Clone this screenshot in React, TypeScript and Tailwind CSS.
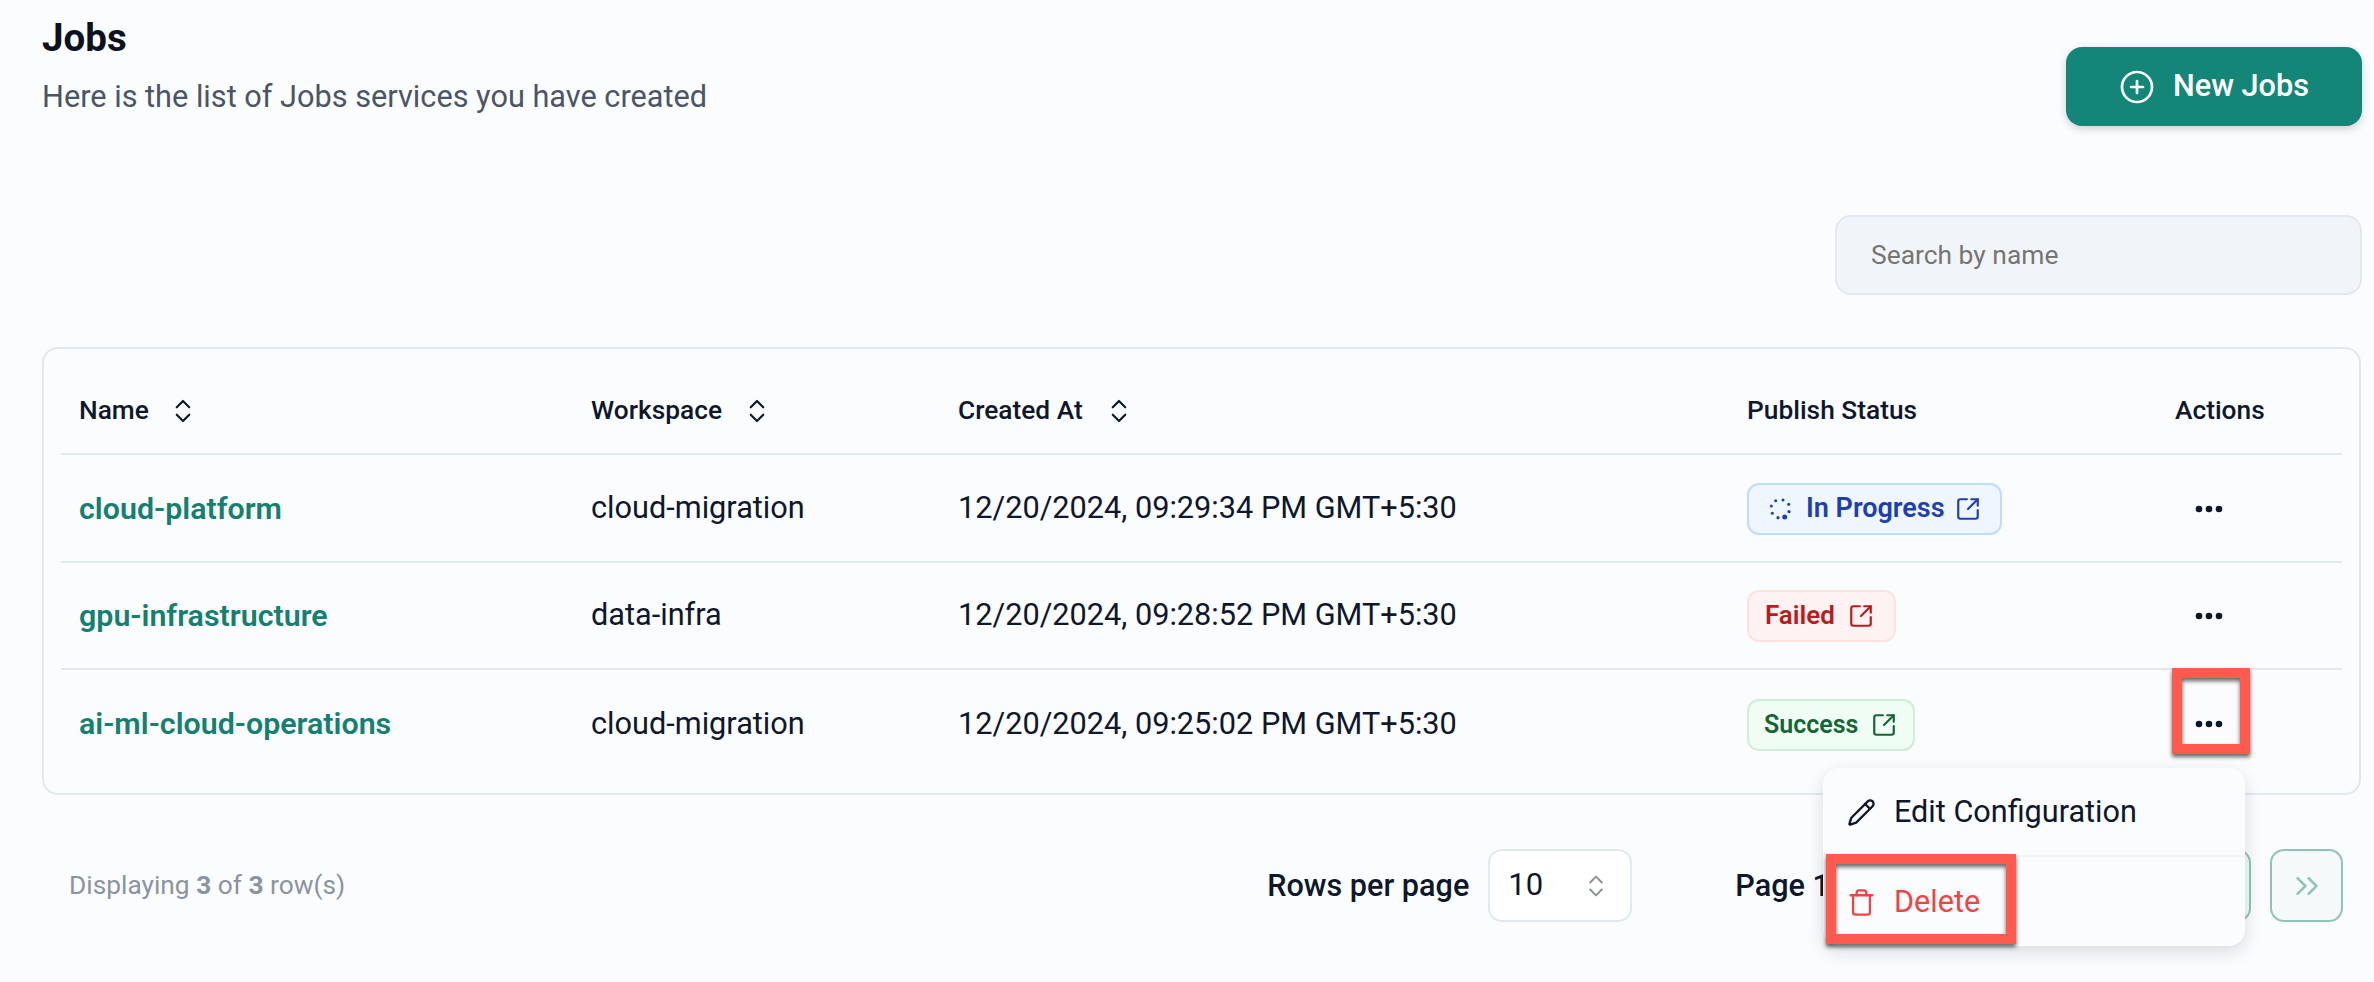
import { ChevronsUpDown, ChevronsRight, CirclePlus, Pencil, SquareArrowOutUpRight, Trash } from "lucide-react";

const DotSpinner = () => (
  <svg width="24" height="24" viewBox="0 0 24 24" fill="currentColor" className="shrink-0">
    <circle cx="7.7" cy="3.7" r="1.5" />
    <circle cx="15" cy="3" r="1.5" />
    <circle cx="20.7" cy="7.3" r="1.5" />
    <circle cx="21" cy="14.7" r="1.6" />
    <circle cx="16.7" cy="20" r="2.5" />
    <circle cx="10" cy="20.7" r="1.6" />
    <circle cx="4.3" cy="16.3" r="1.5" />
    <circle cx="3.3" cy="9" r="1.5" />
  </svg>
);

const Dots = () => (
  <svg width="28" height="8" viewBox="0 0 28 8" fill="#0f172a">
    <circle cx="4" cy="4" r="3.3" />
    <circle cx="14" cy="4" r="3.3" />
    <circle cx="24" cy="4" r="3.3" />
  </svg>
);

const grid = "grid grid-cols-[512px_367px_789px_428px_185px] items-center";

const HeadCell = ({ label, gap }: { label: string; gap: string }) => (
  <div className={`flex items-center pl-[18px] ${gap}`}>
    <span>{label}</span>
    <ChevronsUpDown size={30} strokeWidth={1.7} className="text-[#0f172a]" />
  </div>
);

const rows = [
  { name: "cloud-platform", ws: "cloud-migration", date: "12/20/2024, 09:29:34 PM GMT+5:30", status: "progress", cls: "h-[108px] border-b-2 border-[#e2e8f0] pt-[1px]" },
  { name: "gpu-infrastructure", ws: "data-infra", date: "12/20/2024, 09:28:52 PM GMT+5:30", status: "failed", cls: "h-[107px] border-b-2 border-[#e2e8f0]" },
  { name: "ai-ml-cloud-operations", ws: "cloud-migration", date: "12/20/2024, 09:25:02 PM GMT+5:30", status: "success", cls: "h-[108px]" },
];

const Badge = ({ status }: { status: string }) => {
  if (status === "progress")
    return (
      <div className="inline-flex h-[52px] w-[255px] items-center rounded-[12px] border-2 border-[#bfdbfe] bg-[#eff6ff] pl-[19px] text-[27px] text-[#1e40af]">
        <DotSpinner />
        <span className="ml-[14px]">In Progress</span>
        <SquareArrowOutUpRight size={26} strokeWidth={2} className="ml-[10px]" />
      </div>
    );
  if (status === "failed")
    return (
      <div className="inline-flex h-[52px] w-[149px] items-center rounded-[12px] border-2 border-[#fee2e2] bg-[#fef2f2] pl-[16px] text-[26px] text-[#b91c1c]">
        <span>Failed</span>
        <SquareArrowOutUpRight size={26} strokeWidth={2} className="ml-[13px]" />
      </div>
    );
  return (
    <div className="mt-[2px] inline-flex h-[52px] w-[168px] items-center rounded-[12px] border-2 border-[#cfeed8] bg-[#f0fdf4] pl-[15px] text-[25px] text-[#166534]">
      <span>Success</span>
      <SquareArrowOutUpRight size={26} strokeWidth={2} className="ml-[13px]" />
    </div>
  );
};

const Annotation = ({ className }: { className: string }) => (
  <div className={`absolute border-[10px] border-[#ff5a4d] shadow-[0_3px_4px_rgba(0,0,0,0.6),inset_0_3px_4px_rgba(0,0,0,0.6)] ${className}`} />
);

export default function App() {
  return (
    <div className="relative h-[982px] w-[2374px] overflow-hidden bg-[#fbfcfe] px-[42px] font-['Roboto','Liberation_Sans',sans-serif] text-[#0f172a]">
      <header className="flex items-start justify-between pt-[14px]">
        <div>
          <h1 className="text-[38.5px] font-bold leading-[48px] text-[#0b1120]">Jobs</h1>
          <p className="mt-[15px] text-[30.7px] leading-[40px] text-[#4b5563]">Here is the list of Jobs services you have created</p>
        </div>
        <button className="mr-[-30px] mt-[33px] flex h-[79px] w-[296px] items-center justify-center gap-[18px] rounded-[16px] bg-[#148677] text-[30.7px] font-medium text-white shadow-[0_3px_8px_rgba(0,0,0,0.18)]">
          <CirclePlus size={36} strokeWidth={1.8} />
          New Jobs
        </button>
      </header>

      <div className="mr-[-30px] mt-[89px] flex justify-end">
        <div className="flex h-[80px] w-[527px] items-center rounded-[16px] border-2 border-[#e2e8f0] bg-[#f1f5f9] pl-[34px] pt-[2px] text-[26.4px] text-[#757575]">
          Search by name
        </div>
      </div>

      <div className="mr-[-29px] mt-[52px] h-[448px] rounded-[16px] border-2 border-[#e2e8f0] px-[17px]">
        <div className={`${grid} h-[106px] border-b-2 border-[#e2e8f0] pt-[20px] text-[26.3px] font-medium`}>
          <HeadCell label="Name" gap="gap-[19px]" />
          <HeadCell label="Workspace" gap="gap-[20px]" />
          <HeadCell label="Created At" gap="gap-[21px]" />
          <div className="pl-[18px]">Publish Status</div>
          <div className="pl-[18px]">Actions</div>
        </div>
        {rows.map((r) => (
          <div key={r.name} className={`${grid} text-[30.7px] ${r.cls}`}>
            <div className="pl-[18px] text-[30.4px] font-semibold text-[#15806f]">{r.name}</div>
            <div className="pl-[18px]">{r.ws}</div>
            <div className="pl-[18px]">{r.date}</div>
            <div className="pl-[18px] font-semibold">
              <Badge status={r.status} />
            </div>
            <div className="flex pl-[38px]">
              <Dots />
            </div>
          </div>
        ))}
      </div>

      <footer className="mr-[-29px] mt-[54px] flex h-[73px] items-center">
        <div className="pl-[27px] text-[26.3px] text-[#8a94a0]">
          Displaying <b>3</b> of <b>3</b> row(s)
        </div>
        <div className="ml-[922px] text-[30.6px] font-medium">Rows per page</div>
        <div className="ml-[19px] flex h-[73px] w-[144px] items-center justify-between rounded-[14px] border-2 border-[#e2e8f0] bg-white pl-[18px] pr-[20px] text-[31px]">
          10
          <ChevronsUpDown size={28} strokeWidth={1.6} className="text-[#8a8f98]" />
        </div>
        <div className="ml-[103px] text-[30.6px] font-medium">Page 1 of 1</div>
        <div className="ml-auto mr-[18px] flex gap-[19px]">
          <div className="h-[73px] w-[73px] rounded-[14px] border-2 border-[#8fc4b8] bg-[#f5f9f9]" />
          <div className="flex h-[73px] w-[73px] items-center justify-center rounded-[14px] border-2 border-[#8fc4b8] bg-[#f5f9f9] text-[#8fc4b8]">
            <ChevronsRight size={38} strokeWidth={1.6} />
          </div>
        </div>
      </footer>

      <div className="absolute left-[1823px] top-[768px] h-[178px] w-[422px] rounded-[16px] bg-[#fbfcfe] text-[30.6px] shadow-[0_6px_18px_rgba(15,23,42,0.14)]">
        <div className="flex h-[89px] items-center gap-[18px] border-b-2 border-[#f1f5f9] pl-[24px] pt-[1px]">
          <Pencil size={29} strokeWidth={1.9} />
          <span>Edit Configuration</span>
        </div>
        <div className="flex h-[89px] items-center gap-[18px] pl-[24px] pt-[1px] text-[#ef4444]">
          <Trash size={29} strokeWidth={1.9} />
          <span>Delete</span>
        </div>
      </div>

      <Annotation className="left-[2172px] top-[668px] h-[86px] w-[78px]" />
      <Annotation className="left-[1826px] top-[854px] h-[90px] w-[190px]" />
    </div>
  );
}
